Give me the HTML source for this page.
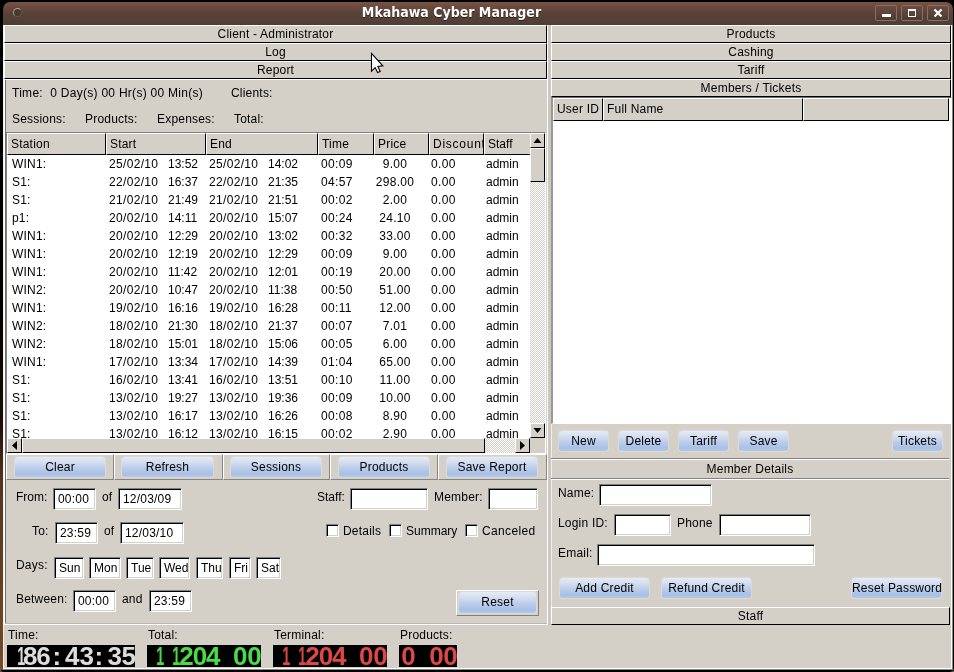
<!DOCTYPE html>
<html><head><meta charset="utf-8"><title>Mkahawa Cyber Manager</title>
<style>
html,body{margin:0;padding:0;}
body{width:954px;height:672px;overflow:hidden;background:#7a4a24;position:relative;font-family:"Liberation Sans",sans-serif;font-size:12px;color:#000;letter-spacing:0.2px;}
div,span{position:absolute;box-sizing:border-box;white-space:pre;}
#win{will-change:transform;left:0;top:0;width:954px;height:672px;background:#d4d0c8;border-radius:0 0 4px 4px;overflow:hidden;}
#title{left:3px;top:2px;width:950px;height:23px;background:linear-gradient(#7a5345 0px,#6a4a3e 5px,#584238 12px,#4e3d35 24px);border-radius:7px 7px 0 0;}
#tt{left:299px;top:2px;width:299px;text-align:center;color:#fff;font-family:"DejaVu Sans Condensed","DejaVu Sans","Liberation Sans",sans-serif;font-stretch:condensed;font-weight:bold;font-size:14px;letter-spacing:0;text-shadow:0 1px 0 #2a1d18;}
.wb{top:5px;width:22px;height:16px;border:1px solid #8a6e62;border-radius:2px;background:linear-gradient(#6b4d42,#4c3a33);}
.t{line-height:14px;}
.n{letter-spacing:0.33px;}
.up{background:#d4d0c8;border-top:1px solid #fff;border-left:1px solid #fff;border-bottom:1px solid #000;border-right:1px solid #000;text-align:center;line-height:16px;}
.hd{background:#d4d0c8;border-top:1px solid #fff;border-left:1px solid #fff;border-bottom:1px solid #000;border-right:1px solid #000;line-height:21px;padding-left:3px;overflow:hidden;}
.btn{background:linear-gradient(#e6ebf3 0%,#d5dff0 25%,#bccdea 55%,#a7c0e6 85%,#b4c8e8 100%);border-radius:3px;text-align:center;box-shadow:0 0 1px 1px #dcdad6;}
.in{background:#fff;border:1px solid #fff;border-top-color:#808080;border-left-color:#808080;box-shadow:inset 1px 1px 0 #000,inset -1px -1px 0 #d4d0c8;line-height:21px;padding-left:4px;}
.tr{background-color:#d4d0c8;background-image:linear-gradient(45deg,#fff 25%,transparent 25%,transparent 75%,#fff 75%),linear-gradient(45deg,#fff 25%,transparent 25%,transparent 75%,#fff 75%);background-size:2px 2px;background-position:0 0,1px 1px;}
.lcd{background:#000;font-family:"Liberation Sans",sans-serif;font-weight:bold;overflow:hidden;white-space:nowrap;font-size:26px;line-height:22px;letter-spacing:0;}
.lcd b{display:inline-block;text-align:center;height:22px;vertical-align:top;overflow:visible;}
</style></head><body><div id="win">

<div style="left:0;top:0;width:954px;height:25px;background:#000;"></div>
<div id="title"><div id="tt">Mkahawa Cyber Manager</div>
<div style="left:10px;top:6px;width:9px;height:9px;border-radius:5px;border:1px solid #6a5248;border-top-color:#b8a59c;border-left-color:#a8948a;background:#4a382f;"></div>
</div>
<div class="wb" style="left:875px;">
<div style="left:6px;top:8px;width:9px;height:3px;background:#fff;"></div>
</div>
<div class="wb" style="left:901px;">
<div style="left:6px;top:3px;width:8px;height:8px;border:1px solid #fff;border-top:2px solid #fff;"></div>
</div>
<div class="wb" style="left:927px;">
<svg width="20" height="14" style="position:absolute;left:0;top:0"><path d="M6.5 3.5 L13.5 10.5 M13.5 3.5 L6.5 10.5" stroke="#fff" stroke-width="2.2" fill="none"/></svg>
</div>
<div style="left:0;top:0;width:3px;height:672px;background:linear-gradient(#000 0px,#000 300px,#1a0d06 420px,#553520 480px,#6a4224 600px,#7a4a24 672px);"></div>
<div style="left:3px;top:25px;width:1px;height:645px;background:#f4f2ee;"></div>
<div style="left:951px;top:25px;width:1px;height:647px;background:#fff;"></div>
<div style="left:952px;top:25px;width:1px;height:647px;background:#8a8680;"></div>
<div style="left:953px;top:4px;width:1px;height:668px;background:#000;"></div>
<div style="left:3px;top:668px;width:949px;height:1px;background:#fff;"></div>
<div style="left:3px;top:669px;width:950px;height:1px;background:#8a8680;"></div>
<div style="left:0;top:670px;width:954px;height:2px;background:#000;"></div>
<div class="up" style="left:4px;top:25px;width:543px;height:18px;">Client - Administrator</div>
<div class="up" style="left:4px;top:43px;width:543px;height:18px;">Log</div>
<div class="up" style="left:4px;top:61px;width:543px;height:18px;">Report</div>
<div style="left:4px;top:79px;width:544px;height:546px;border-left:1px solid #fff;border-top:1px solid #fff;border-right:1px solid #fff;border-bottom:1px solid #fff;"></div>
<div style="left:5px;top:623px;width:542px;height:1px;background:#bab6ae;"></div>
<div style="left:5px;top:80px;width:1px;height:543px;background:#74706a;"></div>
<span class="t" style="left:12px;top:86px;letter-spacing:0.28px;">Time:  0 Day(s) 00 Hr(s) 00 Min(s)</span>
<span class="t" style="left:231px;top:86px;">Clients:</span>
<span class="t" style="left:12px;top:112px;">Sessions:</span>
<span class="t" style="left:85px;top:112px;">Products:</span>
<span class="t" style="left:157px;top:112px;">Expenses:</span>
<span class="t" style="left:234px;top:112px;">Total:</span>
<div style="left:6px;top:132px;width:540px;height:322px;border-top:1px solid #808080;border-left:1px solid #808080;border-bottom:1px solid #fff;border-right:1px solid #fff;background:#d4d0c8;"></div>
<div style="left:7px;top:155px;width:523px;height:283px;background:#fff;overflow:hidden;">
<span class="t" style="left:5px;top:2px;">WIN1:</span>
<span class="t n" style="left:102px;top:2px;">25/02/10</span>
<span class="t" style="left:161px;top:2px;letter-spacing:0;">13:52</span>
<span class="t n" style="left:202px;top:2px;">25/02/10</span>
<span class="t" style="left:261px;top:2px;letter-spacing:0;">14:02</span>
<span class="t n" style="left:314px;top:2px;">00:09</span>
<span class="t n" style="left:358px;top:2px;width:60px;text-align:center;">9.00</span>
<span class="t n" style="left:424px;top:2px;">0.00</span>
<span class="t" style="left:479px;top:2px;letter-spacing:0;">admin</span>
<span class="t" style="left:5px;top:20px;">S1:</span>
<span class="t n" style="left:102px;top:20px;">22/02/10</span>
<span class="t" style="left:161px;top:20px;letter-spacing:0;">16:37</span>
<span class="t n" style="left:202px;top:20px;">22/02/10</span>
<span class="t" style="left:261px;top:20px;letter-spacing:0;">21:35</span>
<span class="t n" style="left:314px;top:20px;">04:57</span>
<span class="t n" style="left:358px;top:20px;width:60px;text-align:center;">298.00</span>
<span class="t n" style="left:424px;top:20px;">0.00</span>
<span class="t" style="left:479px;top:20px;letter-spacing:0;">admin</span>
<span class="t" style="left:5px;top:38px;">S1:</span>
<span class="t n" style="left:102px;top:38px;">21/02/10</span>
<span class="t" style="left:161px;top:38px;letter-spacing:0;">21:49</span>
<span class="t n" style="left:202px;top:38px;">21/02/10</span>
<span class="t" style="left:261px;top:38px;letter-spacing:0;">21:51</span>
<span class="t n" style="left:314px;top:38px;">00:02</span>
<span class="t n" style="left:358px;top:38px;width:60px;text-align:center;">2.00</span>
<span class="t n" style="left:424px;top:38px;">0.00</span>
<span class="t" style="left:479px;top:38px;letter-spacing:0;">admin</span>
<span class="t" style="left:5px;top:56px;">p1:</span>
<span class="t n" style="left:102px;top:56px;">20/02/10</span>
<span class="t" style="left:161px;top:56px;letter-spacing:0;">14:11</span>
<span class="t n" style="left:202px;top:56px;">20/02/10</span>
<span class="t" style="left:261px;top:56px;letter-spacing:0;">15:07</span>
<span class="t n" style="left:314px;top:56px;">00:24</span>
<span class="t n" style="left:358px;top:56px;width:60px;text-align:center;">24.10</span>
<span class="t n" style="left:424px;top:56px;">0.00</span>
<span class="t" style="left:479px;top:56px;letter-spacing:0;">admin</span>
<span class="t" style="left:5px;top:74px;">WIN1:</span>
<span class="t n" style="left:102px;top:74px;">20/02/10</span>
<span class="t" style="left:161px;top:74px;letter-spacing:0;">12:29</span>
<span class="t n" style="left:202px;top:74px;">20/02/10</span>
<span class="t" style="left:261px;top:74px;letter-spacing:0;">13:02</span>
<span class="t n" style="left:314px;top:74px;">00:32</span>
<span class="t n" style="left:358px;top:74px;width:60px;text-align:center;">33.00</span>
<span class="t n" style="left:424px;top:74px;">0.00</span>
<span class="t" style="left:479px;top:74px;letter-spacing:0;">admin</span>
<span class="t" style="left:5px;top:92px;">WIN1:</span>
<span class="t n" style="left:102px;top:92px;">20/02/10</span>
<span class="t" style="left:161px;top:92px;letter-spacing:0;">12:19</span>
<span class="t n" style="left:202px;top:92px;">20/02/10</span>
<span class="t" style="left:261px;top:92px;letter-spacing:0;">12:29</span>
<span class="t n" style="left:314px;top:92px;">00:09</span>
<span class="t n" style="left:358px;top:92px;width:60px;text-align:center;">9.00</span>
<span class="t n" style="left:424px;top:92px;">0.00</span>
<span class="t" style="left:479px;top:92px;letter-spacing:0;">admin</span>
<span class="t" style="left:5px;top:110px;">WIN1:</span>
<span class="t n" style="left:102px;top:110px;">20/02/10</span>
<span class="t" style="left:161px;top:110px;letter-spacing:0;">11:42</span>
<span class="t n" style="left:202px;top:110px;">20/02/10</span>
<span class="t" style="left:261px;top:110px;letter-spacing:0;">12:01</span>
<span class="t n" style="left:314px;top:110px;">00:19</span>
<span class="t n" style="left:358px;top:110px;width:60px;text-align:center;">20.00</span>
<span class="t n" style="left:424px;top:110px;">0.00</span>
<span class="t" style="left:479px;top:110px;letter-spacing:0;">admin</span>
<span class="t" style="left:5px;top:128px;">WIN2:</span>
<span class="t n" style="left:102px;top:128px;">20/02/10</span>
<span class="t" style="left:161px;top:128px;letter-spacing:0;">10:47</span>
<span class="t n" style="left:202px;top:128px;">20/02/10</span>
<span class="t" style="left:261px;top:128px;letter-spacing:0;">11:38</span>
<span class="t n" style="left:314px;top:128px;">00:50</span>
<span class="t n" style="left:358px;top:128px;width:60px;text-align:center;">51.00</span>
<span class="t n" style="left:424px;top:128px;">0.00</span>
<span class="t" style="left:479px;top:128px;letter-spacing:0;">admin</span>
<span class="t" style="left:5px;top:146px;">WIN1:</span>
<span class="t n" style="left:102px;top:146px;">19/02/10</span>
<span class="t" style="left:161px;top:146px;letter-spacing:0;">16:16</span>
<span class="t n" style="left:202px;top:146px;">19/02/10</span>
<span class="t" style="left:261px;top:146px;letter-spacing:0;">16:28</span>
<span class="t n" style="left:314px;top:146px;">00:11</span>
<span class="t n" style="left:358px;top:146px;width:60px;text-align:center;">12.00</span>
<span class="t n" style="left:424px;top:146px;">0.00</span>
<span class="t" style="left:479px;top:146px;letter-spacing:0;">admin</span>
<span class="t" style="left:5px;top:164px;">WIN2:</span>
<span class="t n" style="left:102px;top:164px;">18/02/10</span>
<span class="t" style="left:161px;top:164px;letter-spacing:0;">21:30</span>
<span class="t n" style="left:202px;top:164px;">18/02/10</span>
<span class="t" style="left:261px;top:164px;letter-spacing:0;">21:37</span>
<span class="t n" style="left:314px;top:164px;">00:07</span>
<span class="t n" style="left:358px;top:164px;width:60px;text-align:center;">7.01</span>
<span class="t n" style="left:424px;top:164px;">0.00</span>
<span class="t" style="left:479px;top:164px;letter-spacing:0;">admin</span>
<span class="t" style="left:5px;top:182px;">WIN2:</span>
<span class="t n" style="left:102px;top:182px;">18/02/10</span>
<span class="t" style="left:161px;top:182px;letter-spacing:0;">15:01</span>
<span class="t n" style="left:202px;top:182px;">18/02/10</span>
<span class="t" style="left:261px;top:182px;letter-spacing:0;">15:06</span>
<span class="t n" style="left:314px;top:182px;">00:05</span>
<span class="t n" style="left:358px;top:182px;width:60px;text-align:center;">6.00</span>
<span class="t n" style="left:424px;top:182px;">0.00</span>
<span class="t" style="left:479px;top:182px;letter-spacing:0;">admin</span>
<span class="t" style="left:5px;top:200px;">WIN1:</span>
<span class="t n" style="left:102px;top:200px;">17/02/10</span>
<span class="t" style="left:161px;top:200px;letter-spacing:0;">13:34</span>
<span class="t n" style="left:202px;top:200px;">17/02/10</span>
<span class="t" style="left:261px;top:200px;letter-spacing:0;">14:39</span>
<span class="t n" style="left:314px;top:200px;">01:04</span>
<span class="t n" style="left:358px;top:200px;width:60px;text-align:center;">65.00</span>
<span class="t n" style="left:424px;top:200px;">0.00</span>
<span class="t" style="left:479px;top:200px;letter-spacing:0;">admin</span>
<span class="t" style="left:5px;top:218px;">S1:</span>
<span class="t n" style="left:102px;top:218px;">16/02/10</span>
<span class="t" style="left:161px;top:218px;letter-spacing:0;">13:41</span>
<span class="t n" style="left:202px;top:218px;">16/02/10</span>
<span class="t" style="left:261px;top:218px;letter-spacing:0;">13:51</span>
<span class="t n" style="left:314px;top:218px;">00:10</span>
<span class="t n" style="left:358px;top:218px;width:60px;text-align:center;">11.00</span>
<span class="t n" style="left:424px;top:218px;">0.00</span>
<span class="t" style="left:479px;top:218px;letter-spacing:0;">admin</span>
<span class="t" style="left:5px;top:236px;">S1:</span>
<span class="t n" style="left:102px;top:236px;">13/02/10</span>
<span class="t" style="left:161px;top:236px;letter-spacing:0;">19:27</span>
<span class="t n" style="left:202px;top:236px;">13/02/10</span>
<span class="t" style="left:261px;top:236px;letter-spacing:0;">19:36</span>
<span class="t n" style="left:314px;top:236px;">00:09</span>
<span class="t n" style="left:358px;top:236px;width:60px;text-align:center;">10.00</span>
<span class="t n" style="left:424px;top:236px;">0.00</span>
<span class="t" style="left:479px;top:236px;letter-spacing:0;">admin</span>
<span class="t" style="left:5px;top:254px;">S1:</span>
<span class="t n" style="left:102px;top:254px;">13/02/10</span>
<span class="t" style="left:161px;top:254px;letter-spacing:0;">16:17</span>
<span class="t n" style="left:202px;top:254px;">13/02/10</span>
<span class="t" style="left:261px;top:254px;letter-spacing:0;">16:26</span>
<span class="t n" style="left:314px;top:254px;">00:08</span>
<span class="t n" style="left:358px;top:254px;width:60px;text-align:center;">8.90</span>
<span class="t n" style="left:424px;top:254px;">0.00</span>
<span class="t" style="left:479px;top:254px;letter-spacing:0;">admin</span>
<span class="t" style="left:5px;top:272px;">S1:</span>
<span class="t n" style="left:102px;top:272px;">13/02/10</span>
<span class="t" style="left:161px;top:272px;letter-spacing:0;">16:12</span>
<span class="t n" style="left:202px;top:272px;">13/02/10</span>
<span class="t" style="left:261px;top:272px;letter-spacing:0;">16:15</span>
<span class="t n" style="left:314px;top:272px;">00:02</span>
<span class="t n" style="left:358px;top:272px;width:60px;text-align:center;">2.90</span>
<span class="t n" style="left:424px;top:272px;">0.00</span>
<span class="t" style="left:479px;top:272px;letter-spacing:0;">admin</span>
</div>
<div class="hd" style="left:7px;top:133px;width:99px;height:22px;">Station</div>
<div class="hd" style="left:106px;top:133px;width:100px;height:22px;">Start</div>
<div class="hd" style="left:206px;top:133px;width:112px;height:22px;">End</div>
<div class="hd" style="left:318px;top:133px;width:56px;height:22px;">Time</div>
<div class="hd" style="left:374px;top:133px;width:55px;height:22px;">Price</div>
<div class="hd" style="left:429px;top:133px;width:55px;height:22px;letter-spacing:0.75px;">Discount</div>
<div class="hd" style="left:484px;top:133px;width:60px;height:22px;letter-spacing:0;">Staff</div>
<div class="tr" style="left:530px;top:133px;width:15px;height:305px;"></div>
<div class="up" style="left:530px;top:133px;width:15px;height:15px;"><svg width="13" height="13" style="position:absolute;left:0;top:0"><path d="M2.5 9 L6.5 4 L10.5 9 Z" fill="#000"/></svg></div>
<div class="up" style="left:530px;top:148px;width:15px;height:34px;"></div>
<div class="up" style="left:530px;top:423px;width:15px;height:15px;"><svg width="13" height="13" style="position:absolute;left:0;top:0"><path d="M2.5 4 L6.5 9 L10.5 4 Z" fill="#000"/></svg></div>
<div class="tr" style="left:7px;top:438px;width:523px;height:15px;"></div>
<div class="up" style="left:7px;top:438px;width:15px;height:15px;"><svg width="13" height="13" style="position:absolute;left:0;top:0"><path d="M9 2 L4 6.5 L9 11 Z" fill="#000"/></svg></div>
<div class="up" style="left:22px;top:438px;width:463px;height:15px;"></div>
<div class="up" style="left:515px;top:438px;width:15px;height:15px;"><svg width="13" height="13" style="position:absolute;left:0;top:0"><path d="M4 2 L9 6.5 L4 11 Z" fill="#000"/></svg></div>
<div style="left:6px;top:454px;width:108px;height:26px;border-left:1px solid #fff;border-top:1px solid #fff;border-right:1px solid #858585;border-bottom:1px solid #858585;"></div>
<div class="btn" style="left:15px;top:457px;width:90px;height:20px;line-height:20px;">Clear</div>
<div style="left:114px;top:454px;width:109px;height:26px;border-left:1px solid #fff;border-top:1px solid #fff;border-right:1px solid #858585;border-bottom:1px solid #858585;"></div>
<div class="btn" style="left:122px;top:457px;width:91px;height:20px;line-height:20px;">Refresh</div>
<div style="left:223px;top:454px;width:107px;height:26px;border-left:1px solid #fff;border-top:1px solid #fff;border-right:1px solid #858585;border-bottom:1px solid #858585;"></div>
<div class="btn" style="left:231px;top:457px;width:90px;height:20px;line-height:20px;">Sessions</div>
<div style="left:330px;top:454px;width:108px;height:26px;border-left:1px solid #fff;border-top:1px solid #fff;border-right:1px solid #858585;border-bottom:1px solid #858585;"></div>
<div class="btn" style="left:339px;top:457px;width:90px;height:20px;line-height:20px;">Products</div>
<div style="left:438px;top:454px;width:109px;height:26px;border-left:1px solid #fff;border-top:1px solid #fff;border-right:1px solid #858585;border-bottom:1px solid #858585;"></div>
<div class="btn" style="left:447px;top:457px;width:90px;height:20px;line-height:20px;">Save Report</div>
<span class="t" style="left:16px;top:490px;letter-spacing:0;">From:</span>
<div class="in" style="left:53px;top:488px;width:43px;height:22px;">00:00</div>
<span class="t" style="left:102px;top:490px;">of</span>
<div class="in" style="left:118px;top:488px;width:64px;height:22px;">12/03/09</div>
<span class="t" style="left:32px;top:524px;">To:</span>
<div class="in" style="left:55px;top:522px;width:43px;height:22px;">23:59</div>
<span class="t" style="left:104px;top:524px;">of</span>
<div class="in" style="left:120px;top:522px;width:64px;height:22px;">12/03/10</div>
<span class="t" style="left:317px;top:490px;letter-spacing:0;">Staff:</span>
<div class="in" style="left:350px;top:488px;width:78px;height:22px;"></div>
<span class="t" style="left:434px;top:490px;">Member:</span>
<div class="in" style="left:488px;top:488px;width:50px;height:22px;"></div>
<div class="in" style="left:326px;top:524px;width:13px;height:13px;padding:0;"></div>
<span class="t" style="left:343px;top:524px;">Details</span>
<div class="in" style="left:389px;top:524px;width:13px;height:13px;padding:0;"></div>
<span class="t" style="left:406px;top:524px;letter-spacing:0;">Summary</span>
<div class="in" style="left:465px;top:524px;width:13px;height:13px;padding:0;"></div>
<span class="t" style="left:482px;top:524px;letter-spacing:0.35px;">Canceled</span>
<span class="t" style="left:16px;top:558px;">Days:</span>
<div class="in" style="left:54px;top:557px;width:30px;height:22px;padding-left:4px;letter-spacing:0;">Sun</div>
<div class="in" style="left:89px;top:557px;width:32px;height:22px;padding-left:4px;letter-spacing:0;">Mon</div>
<div class="in" style="left:126px;top:557px;width:28px;height:22px;padding-left:4px;letter-spacing:0;">Tue</div>
<div class="in" style="left:159px;top:557px;width:31px;height:22px;padding-left:4px;letter-spacing:0;">Wed</div>
<div class="in" style="left:196px;top:557px;width:27px;height:22px;padding-left:4px;letter-spacing:0;">Thu</div>
<div class="in" style="left:229px;top:557px;width:22px;height:22px;padding-left:4px;letter-spacing:0;">Fri</div>
<div class="in" style="left:256px;top:557px;width:25px;height:22px;padding-left:4px;letter-spacing:0;">Sat</div>
<span class="t" style="left:16px;top:592px;">Between:</span>
<div class="in" style="left:73px;top:590px;width:43px;height:22px;">00:00</div>
<span class="t" style="left:122px;top:592px;">and</span>
<div class="in" style="left:149px;top:590px;width:43px;height:22px;">23:59</div>
<div style="left:456px;top:590px;width:83px;height:26px;border-left:1px solid #fff;border-top:1px solid #fff;border-right:1px solid #808080;border-bottom:1px solid #808080;"></div>
<div class="btn" style="left:459px;top:592px;width:77px;height:21px;line-height:21px;">Reset</div>
<div style="left:547px;top:25px;width:1px;height:600px;background:#fff;"></div>
<div style="left:548px;top:25px;width:3px;height:600px;background:#ccc8c0;"></div>
<div style="left:551px;top:424px;width:1px;height:183px;background:#f0eeea;"></div>
<div class="up" style="left:551px;top:25px;width:400px;height:18px;">Products</div>
<div class="up" style="left:551px;top:43px;width:400px;height:18px;">Cashing</div>
<div class="up" style="left:551px;top:61px;width:400px;height:18px;">Tariff</div>
<div class="up" style="left:551px;top:79px;width:400px;height:18px;">Members / Tickets</div>
<div style="left:551px;top:97px;width:401px;height:327px;border-top:1px solid #707070;border-left:2px solid #9a9690;border-bottom:1px solid #fff;border-right:1px solid #fff;background:#fff;"></div>
<div class="hd" style="left:553px;top:98px;width:50px;height:23px;">User ID</div>
<div class="hd" style="left:603px;top:98px;width:200px;height:23px;">Full Name</div>
<div class="hd" style="left:803px;top:98px;width:146px;height:23px;"></div>
<div class="btn" style="left:559px;top:431px;width:49px;height:20px;line-height:20px;">New</div>
<div class="btn" style="left:619px;top:431px;width:49px;height:20px;line-height:20px;">Delete</div>
<div class="btn" style="left:679px;top:431px;width:49px;height:20px;line-height:20px;">Tariff</div>
<div class="btn" style="left:739px;top:431px;width:49px;height:20px;line-height:20px;">Save</div>
<div class="btn" style="left:893px;top:431px;width:49px;height:20px;line-height:20px;">Tickets</div>
<div style="left:551px;top:458px;width:398px;height:1px;background:#808080;"></div>
<div style="left:551px;top:459px;width:398px;height:1px;background:#fff;"></div>
<span class="t" style="left:551px;top:462px;width:398px;text-align:center;">Member Details</span>
<div style="left:551px;top:478px;width:398px;height:1px;background:#808080;"></div>
<div style="left:551px;top:479px;width:398px;height:1px;background:#fff;"></div>
<span class="t" style="left:558px;top:486px;">Name:</span>
<div class="in" style="left:599px;top:484px;width:113px;height:22px;"></div>
<span class="t" style="left:558px;top:516px;">Login ID:</span>
<div class="in" style="left:614px;top:514px;width:57px;height:22px;"></div>
<span class="t" style="left:677px;top:516px;">Phone</span>
<div class="in" style="left:719px;top:514px;width:92px;height:22px;"></div>
<span class="t" style="left:558px;top:546px;">Email:</span>
<div class="in" style="left:597px;top:544px;width:218px;height:22px;"></div>
<div class="btn" style="left:560px;top:578px;width:89px;height:20px;line-height:20px;">Add Credit</div>
<div class="btn" style="left:662px;top:578px;width:89px;height:20px;line-height:20px;">Refund Credit</div>
<div class="btn" style="left:852px;top:578px;width:89px;height:20px;line-height:20px;">Reset Password</div>
<div class="up" style="left:551px;top:607px;width:399px;height:18px;">Staff</div>
<span class="t" style="left:8px;top:628px;">Time:</span>
<span class="t" style="left:148px;top:628px;">Total:</span>
<span class="t" style="left:274px;top:628px;">Terminal:</span>
<span class="t" style="left:400px;top:628px;">Products:</span>
<div class="lcd" style="left:7px;top:645px;width:128px;height:22px;color:#dcdcdc;">
<b style="width:13.9px;margin-left:4.2px;transform:scaleX(.55);transform-origin:100% 50%;">1</b><b style="width:12.5px;margin-left:-2.1px;">8</b><b style="width:12.6px;margin-left:0.7px;">6</b><b style="width:12.0px;margin-left:2.2px;">:</b><b style="width:13.0px;margin-left:2.0px;">4</b><b style="width:13.0px;margin-left:1.5px;">3</b><b style="width:12.0px;margin-left:0.5px;">:</b><b style="width:13.0px;margin-left:2.5px;">3</b><b style="width:12.5px;margin-left:1.0px;">5</b></div>
<div class="lcd" style="left:147px;top:645px;width:114px;height:22px;color:#48dc48;">
<b style="width:13.9px;margin-left:3.2px;transform:scaleX(.55);transform-origin:100% 50%;">1</b><b style="width:13.9px;margin-left:2.1px;transform:scaleX(.55);transform-origin:100% 50%;">1</b><b style="width:13.0px;margin-left:-0.9px;">2</b><b style="width:12.9px;margin-left:0.5px;">0</b><b style="width:12.5px;margin-left:0.4px;">4</b><b style="width:13.0px;margin-left:0.5px;">&nbsp;</b><b style="width:12.8px;margin-left:1.0px;">0</b><b style="width:13.0px;margin-left:1.4px;">0</b></div>
<div class="lcd" style="left:273px;top:645px;width:114px;height:22px;color:#dc4848;">
<b style="width:13.9px;margin-left:3.2px;transform:scaleX(.55);transform-origin:100% 50%;">1</b><b style="width:13.9px;margin-left:2.1px;transform:scaleX(.55);transform-origin:100% 50%;">1</b><b style="width:13.0px;margin-left:-0.9px;">2</b><b style="width:12.9px;margin-left:0.5px;">0</b><b style="width:12.5px;margin-left:0.4px;">4</b><b style="width:13.0px;margin-left:0.5px;">&nbsp;</b><b style="width:12.8px;margin-left:1.0px;">0</b><b style="width:13.0px;margin-left:1.4px;">0</b></div>
<div class="lcd" style="left:399px;top:645px;width:58px;height:22px;color:#dc4848;">
<b style="width:13.0px;margin-left:2.2px;">0</b><b style="width:13.0px;margin-left:0.8px;">&nbsp;</b><b style="width:12.9px;margin-left:1.3px;">0</b><b style="width:13.0px;margin-left:1.0px;">0</b></div>
<svg width="20" height="26" viewBox="0 0 20 26" style="position:absolute;left:366px;top:50px;"><path d="M5.5 3.5 L5.5 21.2 L9.2 17.6 L11.6 22.6 L14.2 21.4 L11.9 16.4 L16.8 15.9 Z" fill="#fff" stroke="#000" stroke-width="1.1" stroke-linejoin="miter"/></svg>
</div></body></html>
